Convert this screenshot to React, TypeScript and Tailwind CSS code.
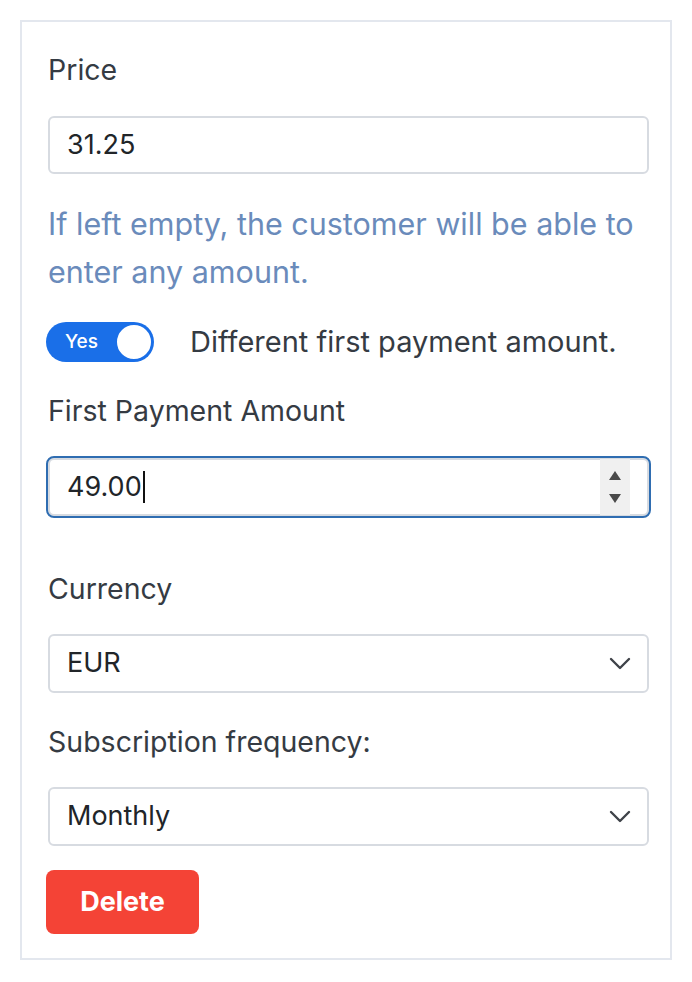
import React from "react";

const font = { fontFamily: "Inter, 'Noto Sans', sans-serif" };

function Chevron() {
  return (
    <svg width="22" height="14" viewBox="0 0 22 14" fill="none">
      <path d="M2 2l9 9 9-9" stroke="#3f4349" strokeWidth="2.4" strokeLinecap="round" strokeLinejoin="round" />
    </svg>
  );
}

function Select({ value }: { value: string }) {
  return (
    <div className="flex h-[59px] items-center justify-between rounded-md border-2 border-[#d7dbe1] bg-white pl-[17px] pr-[16px] text-[27px] text-[#212529]">
      <span>{value}</span>
      <Chevron />
    </div>
  );
}

export default function App() {
  return (
    <div className="bg-white p-5" style={font}>
      <div className="flex h-[940px] flex-col border-2 border-[#e3e7ee] pl-[26px] pr-[21px] pt-[28px] pb-[23px]">
        {/* price */}
        <div className="h-10 text-[28.5px] leading-10 text-[#353b43]">Price</div>
        <div className="mt-[26px] flex h-[58px] items-center rounded-md border-2 border-[#d7dbe1] pl-[17px] text-[27px] text-[#212529]">
          31.25
        </div>
        <p className="mt-[26px] text-[30.5px] leading-[48px] text-[#6a8bbb]">
          If left empty, the customer will be able to enter any amount.
        </p>

        {/* toggle */}
        <div className="mt-[26px] flex h-10 items-center">
          <div className="-ml-[2px] flex h-10 w-[108px] items-center justify-between rounded-full bg-[#1a6fe8] pl-[19px] pr-[1px]">
            <span className="text-[19px] font-medium text-white">Yes</span>
            <span className="h-[38px] w-[38px] rounded-full border-2 border-[#1a6fe8] bg-white" />
          </div>
          <span className="ml-[36px] text-[29px] text-[#353b43]">Different first payment amount.</span>
        </div>

        {/* first payment */}
        <div className="mt-[29px] h-10 text-[28.5px] leading-10 text-[#353b43]">First Payment Amount</div>
        <div className="mt-[27px] flex h-[58px] items-center justify-between rounded-md border-2 border-[#d7dbe1] pl-[17px] outline-2 outline-[#2f6db1] text-[27px] text-[#212529]">
          <span className="flex items-center">
            49.00
            <span className="ml-[1px] h-[32px] w-[2px] bg-[#111]" />
          </span>
          <div className="mr-[17px] flex h-[56px] w-[30px] flex-col items-center justify-center gap-[14px] bg-[#f0f0f0]">
            <span className="h-0 w-0 border-x-[6px] border-b-[9px] border-x-transparent border-b-[#4a4a4a]" />
            <span className="h-0 w-0 border-x-[6px] border-t-[9px] border-x-transparent border-t-[#4a4a4a]" />
          </div>
        </div>

        {/* currency */}
        <div className="mt-[53px] h-10 text-[28.5px] leading-10 text-[#353b43]">Currency</div>
        <div className="mt-[25px]">
          <Select value="EUR" />
        </div>

        <div className="mt-[29px] h-10 text-[28.5px] leading-10 text-[#353b43]">Subscription frequency:</div>
        <div className="mt-[25px]">
          <Select value="Monthly" />
        </div>

        <div className="mt-[24px]">
          <button className="-ml-[2px] h-16 w-[153px] rounded-lg bg-[#f44336] text-[27px] font-bold text-white">
            Delete
          </button>
        </div>
      </div>
    </div>
  );
}
